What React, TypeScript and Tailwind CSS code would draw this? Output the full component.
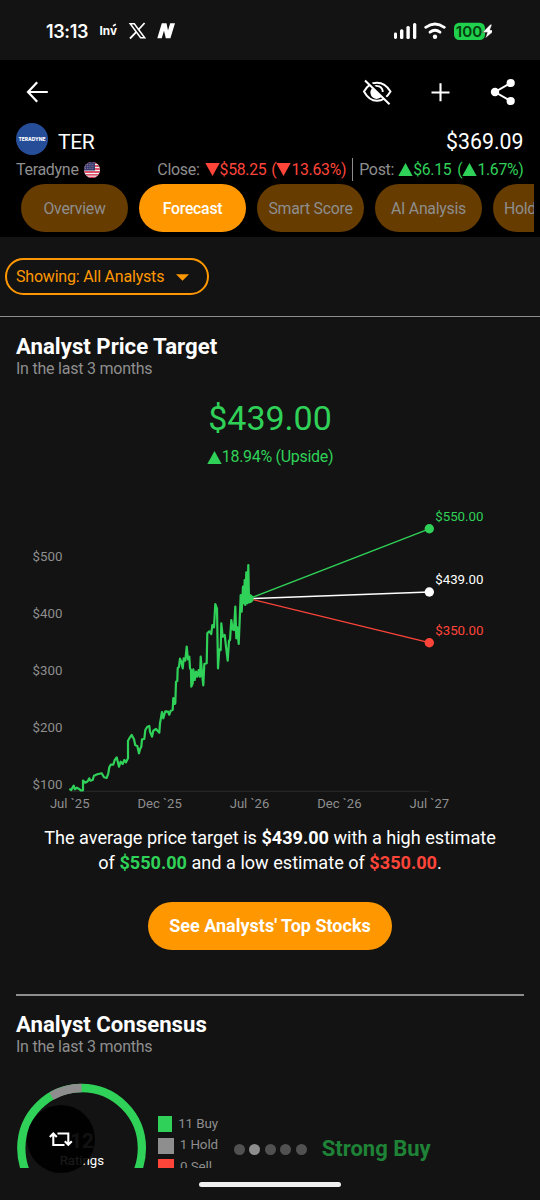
import React from "react";

const tabs = ["Overview", "Forecast", "Smart Score", "AI Analysis"];

const history: [number, number][] = [
  [69.3, 789], [71.3, 790], [72.7, 787.3], [73.7, 785.7], [75, 789.3], [76.7, 787.7], [78.7, 788.7], [80.7, 790.3], [83, 790.3],
  [83, 780.7], [85.3, 782.7], [87.7, 781.3], [89.3, 778.3], [90.3, 780.7], [92.7, 780], [94, 775.7], [97.3, 774.3], [101.7, 773.3],
  [104, 777.3], [106.7, 778], [108.3, 773.3], [109.3, 767.3], [110.7, 764.7], [113.3, 764.7], [114.7, 760], [116.7, 757.3],
  [118, 762.7], [119, 766.7], [120.7, 761.7], [122.7, 764], [124.3, 760], [126, 762.3], [128, 758.3], [128, 740.7], [130, 737.3],
  [131.7, 735], [134, 739.3], [135.3, 745.3], [137.3, 746], [139, 753.3], [140, 749.3], [141.3, 746.7], [142, 739.3], [144.3, 739],
  [145.3, 730], [147.3, 726.7], [149.3, 726], [150, 731.7], [152, 736.7], [153.3, 730.7], [156, 729], [159.3, 732.7], [160, 723.3],
  [162, 712], [163.3, 718.3], [165.3, 711.3], [168, 711.7], [169.3, 714.7], [170.7, 710.7], [172.7, 710], [173.3, 698], [174.7, 704],
  [175.3, 703.3], [176, 681.7], [177.3, 681], [177.7, 668.3], [179, 666.7], [180, 658.7], [181.3, 661.7], [182.7, 668.3],
  [183.7, 658.3], [185.3, 660.7], [186.7, 646.7], [188, 659.3], [189.3, 656.7], [190, 668.3], [191, 670], [191.3, 686.7],
  [192.7, 683.3], [193.3, 669.3], [194.7, 680], [196, 671.7], [197.3, 676.7], [198.7, 670], [200, 676.7], [200.7, 656.7],
  [202, 673.3], [203.3, 685.3], [204.3, 664], [206.7, 663.3], [207.3, 633.3], [209.3, 631.3], [211.3, 634], [212.3, 625],
  [214, 627.3], [215.3, 604], [217, 608.7], [218, 668.3], [219.3, 649.3], [220.7, 650], [221.3, 623.3], [222.7, 636.7],
  [224.7, 635], [226, 646.7], [227.7, 660.7], [229, 640.7], [230, 640], [231.3, 620], [232.7, 629.3], [234, 630], [235.3, 606.7],
  [236.3, 638.3], [237.3, 627.3], [238.7, 644], [239.7, 620], [240.7, 595], [241.7, 611.7], [243, 586.7], [244, 603.3],
  [244.7, 580], [245.3, 605], [246.3, 572.3], [247.3, 603.3], [248.3, 565], [249, 598.7],
];

const targets = [
  { label: "$350.00", y: 642.7, color: "#ff453a" },
  { label: "$439.00", y: 592, color: "#ffffff" },
  { label: "$550.00", y: 528.8, color: "#30d158" },
];

function Triangle({ down = false }: { down?: boolean }) {
  return (
    <svg width="15" height="13" viewBox="0 0 15 13" className="shrink-0 fill-current">
      <path d={down ? "M0.3 0H14.7L7.5 13Z" : "M0.3 13H14.7L7.5 0Z"} />
    </svg>
  );
}

function StatusBar() {
  return (
    <div className="flex h-[60px] items-center justify-between pt-0.5 pl-[46px] pr-[48px] text-white">
      <div className="flex items-center">
        <span className="w-[53px] font-['Inter'] text-[18px] font-semibold tracking-[-0.35px]">13:13</span>
        <svg width="78" height="20" viewBox="0 0 78 20">
          <text x="0.5" y="14" fill="white" fontFamily="Inter" fontSize="12" fontWeight="700" textLength="17.5" lengthAdjust="spacingAndGlyphs">Inv</text>
          <path d="M14 5L16.8 3.2" stroke="white" strokeWidth="1.7" />
          <g fill="none" stroke="white">
            <path d="M31.2 2.7H35.3L45.7 16.7H41.6Z" strokeWidth="1.5" />
            <path d="M45.6 2L39.2 9M37.4 10.9L31 17.5" strokeWidth="1.8" />
          </g>
          <path fill="white" d="M58.3 17.2L62.8 2.2H67.5L69 9.5L71.2 2.2H76L71.4 17.2H66.8L65 9.7L62.7 17.2Z" />
        </svg>
      </div>
      <div className="flex items-center">
        <svg width="54" height="18" viewBox="0 0 54 18" fill="white">
          <rect x="0" y="10.5" width="3" height="6.5" rx="1.4" />
          <rect x="6" y="7.2" width="3.4" height="9.8" rx="1.5" />
          <rect x="12.4" y="4" width="3.4" height="13" rx="1.5" />
          <rect x="19" y="1" width="3.3" height="16" rx="1.5" />
          <g fill="none" stroke="white" strokeWidth="2.8" strokeLinecap="round">
            <path d="M31.7 5.3Q41 -1.3 50.3 5.3" />
            <path d="M36 10.2Q41 6.4 46 10.2" />
          </g>
          <circle cx="41" cy="14.8" r="2.2" />
        </svg>
        <svg width="44" height="20" viewBox="0 0 44 20">
          <rect x="6" y="1.7" width="31" height="17.3" rx="5.2" fill="#1fd14c" />
          <text x="7.8" y="15.5" fontFamily="Inter" fontSize="15" fontWeight="600" fill="#06400f" textLength="26.5" lengthAdjust="spacingAndGlyphs">100</text>
          <path d="M42.2 3.6L34.4 11.4H39.3L37.3 17.2L47.2 9H42L44 3.6Z" fill="white" stroke="#131313" strokeWidth="0.4" className="overflow-visible" />
        </svg>
      </div>
    </div>
  );
}

function Toolbar() {
  return (
    <div className="flex h-[63px] items-center pt-px pl-[26px] pr-[24px] text-white">
      <svg width="22" height="22" viewBox="0 0 22 22" fill="none" stroke="white" strokeWidth="2.2">
        <path d="M11.2 1.2L2 11L11.2 20.8M2 11H21.8" />
      </svg>
      <svg className="ml-auto" width="30" height="28" viewBox="0 0 30 28" fill="none" stroke="white">
        <path d="M2 13.5Q7 4.8 15 4.8T28.5 13.5Q23 22.8 15 22.8T2 13.5Z" strokeWidth="2" />
        <path d="M10.5 9.3A6.3 6.3 0 0 1 20.8 14" strokeWidth="1.8" />
        <path d="M9.8 10.5A5.8 5.8 0 0 0 19.8 18.5Z" fill="white" stroke="none" />
        <path d="M4.2 1.3L29.2 25.3" stroke="black" strokeWidth="2.6" />
        <path d="M3 2.5L27.5 26.2" strokeWidth="2" />
      </svg>
      <svg className="ml-[39px]" width="19" height="19" viewBox="0 0 19 19" fill="none" stroke="white" strokeWidth="2.1">
        <path d="M9.5 0.2V18.2M0.5 9.5H18.5" />
      </svg>
      <svg className="ml-[40px]" width="26" height="28" viewBox="0 0 26 28" fill="white" stroke="white">
        <path d="M20.5 5L5 14L20.5 23" fill="none" strokeWidth="2" />
        <g stroke="none">
          <circle cx="20.7" cy="5" r="4.1" />
          <circle cx="5" cy="14" r="4.2" />
          <circle cx="20.7" cy="23" r="4.1" />
        </g>
      </svg>
    </div>
  );
}

function Flag() {
  return (
    <span className="ml-[5px] block size-4 overflow-hidden rounded-full">
      <svg width="16" height="16" viewBox="0 0 16 16">
        <rect width="16" height="16" fill="#f4f4f4" />
        <path d="M0 1H16M0 4H16M0 7H16M0 10H16M0 12.8H16M0 15.5H16" stroke="#d0213f" strokeWidth="1.3" />
        <rect width="11" height="8.5" fill="#3c3b6e" />
        <path d="M1 2.3H10M1 4.3H10M1 6.3H10" stroke="#a9a9c9" strokeWidth="0.7" strokeDasharray="1 1.2" />
      </svg>
    </span>
  );
}

function Header() {
  return (
    <header className="flex h-[177px] flex-col bg-black">
      <Toolbar />
      <div className="flex h-8 items-start pl-4 pr-[16.5px] text-white">
        <div className="flex size-8 items-center justify-center rounded-full bg-[#264d98]">
          <svg width="28" height="8" viewBox="0 0 28 8">
            <text x="0.5" y="5.8" fill="white" fontFamily="Inter" fontSize="5" fontWeight="800" textLength="27" lengthAdjust="spacingAndGlyphs">TERADYNE</text>
          </svg>
        </div>
        <span className="ml-[10px] pt-[6px] text-[21px] leading-[26px] tracking-[-0.3px]">TER</span>
        <span className="ml-auto pt-[6px] text-[21.3px] leading-[26px]">$369.09</span>
      </div>
      <div className="flex h-[29px] items-start pt-[2px] pl-4 pr-[16.5px] text-[15.8px] leading-[22px] tracking-[-0.3px] whitespace-nowrap text-[#8e8e8e]">
        <div className="flex items-center pt-[2px] text-[16px]">Teradyne <Flag /></div>
        <div className="ml-auto flex items-center">
          <span className="mr-[5px] pt-[2px] text-[16px]">Close:</span>
          <span className="flex items-center pt-px text-[#ff453a]"><Triangle down />$58.25<span className="ml-[5px]">(</span><Triangle down />13.63%)</span>
          <span className="mx-[6px] h-[23px] w-px bg-[#8e8e8e]" />
          <span className="mr-[4px] pt-[2px] text-[16px]">Post:</span>
          <span className="flex items-center pt-px text-[#30d158]"><Triangle />$6.15<span className="ml-[6px]">(</span><Triangle />1.67%)</span>
        </div>
      </div>
      <nav className="mr-[6px] flex h-12 gap-[11px] overflow-hidden pl-[21px] text-[15.8px] tracking-[-0.25px]">
        {tabs.map((tab) => (
          <div key={tab} className={tab === "Forecast"
            ? "flex w-[107px] shrink-0 items-center justify-center rounded-full bg-[#ff9800] pt-px font-medium text-white"
            : "flex w-[107px] shrink-0 items-center justify-center rounded-full bg-[#663c00] pt-px text-[#8e8e8e]"}>
            {tab}
          </div>
        ))}
        <div className="flex w-[107px] shrink-0 items-center rounded-full bg-[#663c00] pt-px pl-[11px] text-[#8e8e8e]">Holdings</div>
      </nav>
    </header>
  );
}

function SectionTitle({ title }: { title: string }) {
  return (
    <div className="pl-4">
      <h2 className="h-[26px] text-[22.2px] leading-[26px] font-bold text-white">{title}</h2>
      <p className="h-[19px] text-[16px] leading-[19px] tracking-[-0.23px] text-[#8e8e8e]">In the last 3 months</p>
    </div>
  );
}

function Chart() {
  return (
    <svg className="block" width="540" height="330" viewBox="0 490 540 330" fontFamily="Roboto, sans-serif" fontSize="13.3">
      {[500, 400, 300, 200, 100].map((v, i) => (
        <text key={v} x="32.5" y={561 + i * 57} fill="#8e8e8e">${v}</text>
      ))}
      <path d="M70 791.3H429" stroke="#2c2c2c" />
      {["Jul `25", "Dec `25", "Jul `26", "Dec `26", "Jul `27"].map((label, i) => (
        <text key={label} x={69.7 + i * 89.9} y="808.3" textAnchor="middle" fill="#8e8e8e" fontSize="13.1">{label}</text>
      ))}
      <polyline points={history.map((p) => p.join(",")).join(" ")} fill="none" stroke="#30d158" strokeWidth="2.2" strokeLinejoin="round" />
      {targets.map((t) => (
        <g key={t.label} fill={t.color}>
          <path d={`M249 598.7L429.3 ${t.y}`} stroke={t.color} strokeWidth="1.3" />
          <circle cx="429.3" cy={t.y} r="4.7" />
          <text x="435.2" y={t.y - 7.7}>{t.label}</text>
        </g>
      ))}
      <circle cx="249" cy="598.8" r="4.7" fill="#30d158" />
    </svg>
  );
}

function Consensus() {
  const legend = [
    { label: "11 Buy", swatch: "size-4 bg-[#30d158]" },
    { label: "1 Hold", swatch: "size-4 bg-[#8e8e8e]" },
    { label: "0 Sell", swatch: "size-4 bg-[#ff453a]" },
  ];
  return (
    <div className="mt-[27px] flex">
      <svg className="shrink-0" width="158" height="132" viewBox="0 1083 158 132" fontFamily="Roboto, sans-serif">
        <circle cx="81.6" cy="1148.3" r="60.3" fill="none" stroke="#30d158" strokeWidth="8.3" />
        <path d="M51.45 1096.1A60.3 60.3 0 0 1 81.6 1088" fill="none" stroke="#8e8e8e" strokeWidth="8.3" />
        <text x="82" y="1147.8" textAnchor="middle" fill="#b0b0b0" fontSize="20.5" fontWeight="700">12</text>
        <text x="81.8" y="1165.2" textAnchor="middle" fill="white" fontSize="13.2">Ratings</text>
      </svg>
      <div className="flex w-[60px] flex-col gap-[5.5px] pt-[33px] text-[13.4px] tracking-[-0.1px] whitespace-nowrap text-[#8e8e8e]">
        {legend.map((item) => (
          <div key={item.label} className="flex h-4 items-center gap-[6px]">
            <span className={item.swatch} />
            {item.label}
          </div>
        ))}
      </div>
      <div className="ml-[15.7px] flex h-[132px] items-center gap-[4.5px]">
        {[0, 1, 2, 3, 4].map((i) => (
          <span key={i} className={i === 1 ? "size-[11px] rounded-full bg-[#8e8e8e]" : "size-[11px] rounded-full bg-[#515151]"} />
        ))}
      </div>
      <span className="ml-[15px] pt-[53px] text-[22px] leading-[26px] font-bold text-[#1f8337]">Strong Buy</span>
    </div>
  );
}

export default function App() {
  return (
    <div className="relative flex h-[1200px] w-[540px] flex-col overflow-hidden bg-[#131313] font-['Roboto',sans-serif]">
      <StatusBar />
      <Header />
      <main className="h-[931px] overflow-hidden">
        <div className="h-[80px] border-b border-[#8e8e8e] pt-[21px] pl-[5px]">
          <button className="flex h-[37px] w-[204px] items-center rounded-full border-2 border-[#ff9800] pt-px pl-[9px] text-[16px] tracking-[-0.2px] text-[#ff9800]">
            Showing: All Analysts
            <svg className="ml-[12px]" width="13" height="7" viewBox="0 0 13 7" fill="#ff9800"><path d="M0 0.3H13L6.5 6.7Z" /></svg>
          </button>
        </div>
        <div className="pt-[16px]"><SectionTitle title="Analyst Price Target" /></div>
        <div className="mt-[18px] text-center text-[34px] leading-[44px] text-[#30d158]">$439.00</div>
        <div className="mt-[7px] mb-[24px] flex h-[19px] items-center justify-center pt-px text-[16px] tracking-[-0.3px] text-[#30d158]">
          <Triangle />18.94% (Upside)
        </div>
        <Chart />
        <p className="mt-[5px] text-center text-[18.13px] leading-[25px] text-white">
          The average price target is <b>$439.00</b> with a high estimate
          <br />
          of <b className="text-[#30d158]">$550.00</b> and a low estimate of <b className="text-[#ff453a]">$350.00</b>.
        </p>
        <button className="mx-auto mt-[27px] flex h-12 w-[244px] items-center justify-center rounded-full bg-[#ff9800] pb-px text-[18px] font-bold text-white">
          See Analysts' Top Stocks
        </button>
        <div className="mx-4 mt-11 mb-[15px] h-0.5 bg-[#8e8e8e]" />
        <SectionTitle title="Analyst Consensus" />
        <Consensus />
      </main>
      <footer className="flex h-8 items-center justify-center">
        <div className="h-[5px] w-[142px] rounded-full bg-[#f0f0f0]" />
      </footer>
      <button className="absolute top-[1105px] left-[27px] flex size-[68px] items-center justify-center rounded-full bg-black/90">
        <svg width="24" height="16" viewBox="0 0 24 16" fill="none" stroke="white" strokeWidth="2.1">
          <path d="M0.8 6L4.3 2.5L7.8 6M4.3 3V14H15.5M8.5 2.5H19.3V13.5M15.8 10.3L19.3 13.8L22.8 10.3" />
        </svg>
      </button>
    </div>
  );
}
